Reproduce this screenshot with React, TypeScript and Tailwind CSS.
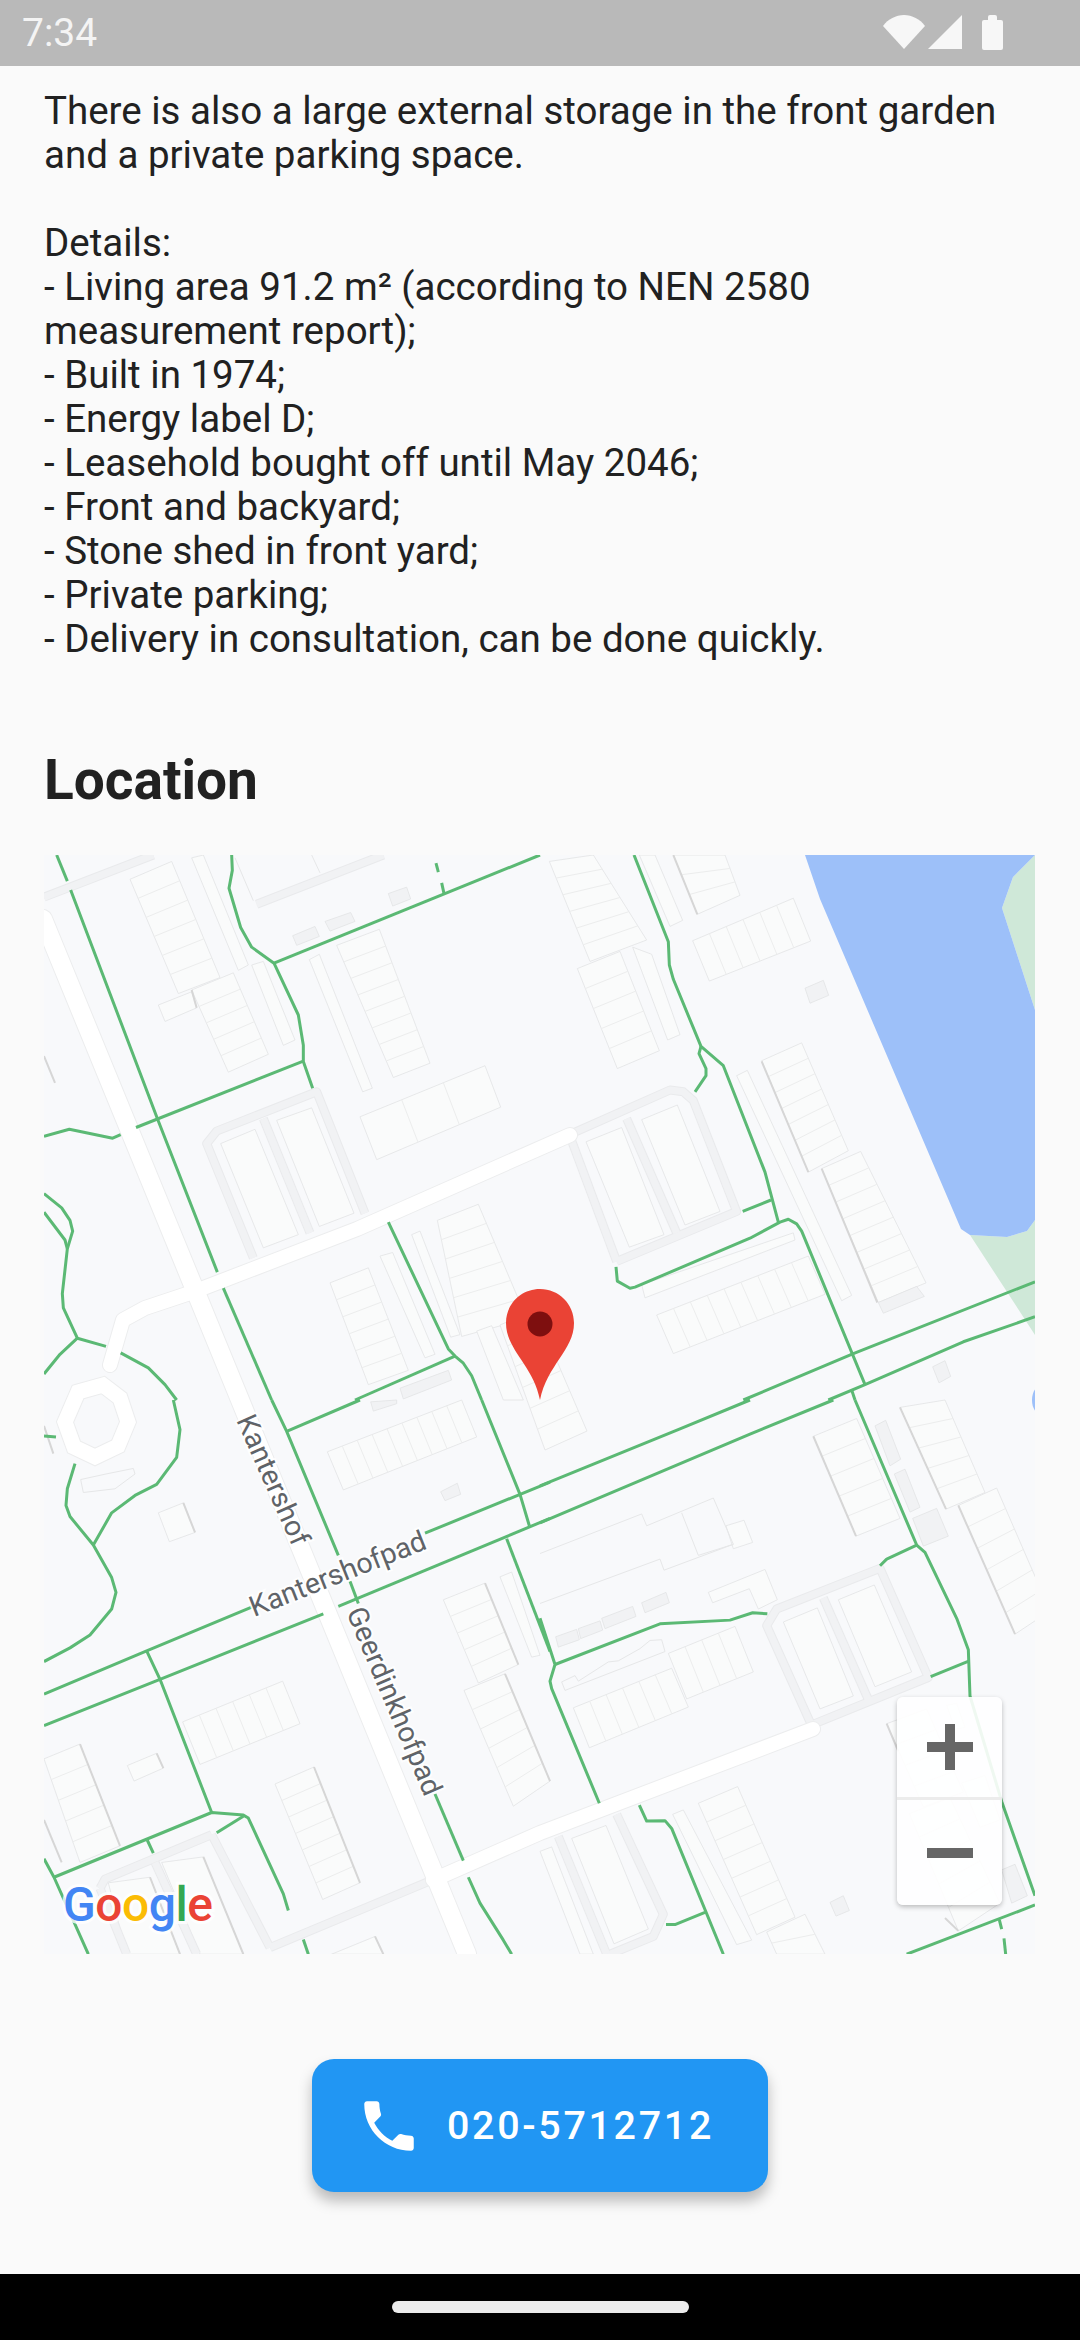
import { MdPhone } from 'react-icons/md'

type Block = { p: number[]; n?: number; gray?: boolean }
type Quad = {
  x: number
  y: number
  sy: number
  green: string[]
  service: string[]
  shadow: string[]
  blocks: Block[]
  outlines: string[]
}

const copy = [
  'There is also a large external storage in the front garden',
  'and a private parking space.',
  '',
  'Details:',
  '- Living area 91.2 m² (according to NEN 2580',
  'measurement report);',
  '- Built in 1974;',
  '- Energy label D;',
  '- Leasehold bought off until May 2046;',
  '- Front and backyard;',
  '- Stone shed in front yard;',
  '- Private parking;',
  '- Delivery in consultation, can be done quickly.',
]

// map features, traced per quarter of the map in that quarter's own coordinates
const quads: Quad[] = [
  {
    x: 30,
    y: 840,
    sy: 2.8,
    green: [
      '80,42 112,115',
      '122,140 382,780 562,1210',
      '580,1255 725,1568',
      '318,805 818,620',
      '42,830 118,810 248,835 272,825',
      '605,42 607,85 597,135 632,245 665,300 732,345 805,490 820,575 820,620 848,695',
      '732,345 1530,42',
      '1218,65 1225,90',
      '1235,120 1242,150',
      '1075,1070 1255,1425 1275,1445 1300,1465 1325,1500 1355,1568',
      '975,1568 1275,1445',
      '42,990 95,1030 120,1065 128,1095 112,1145 97,1270 100,1310 142,1395 228,1418',
      '42,1042 105,1120 112,1145',
      '142,1395 90,1440 42,1495',
      '272,1436 355,1478 405,1525 440,1568',
    ],
    service: [
      '42,160 370,42',
      '680,180 1060,42',
      '670,1170 530,850 560,815 860,705 1005,1045',
      '700,780 840,1100',
    ],
    shadow: ['485,420 500,470', '42,605 75,680'],
    blocks: [
      { p: [300, 110, 425, 60, 570, 385, 445, 430], n: 6 },
      { p: [485, 420, 610, 372, 715, 600, 595, 650], n: 5 },
      { p: [920, 295, 1048, 250, 1200, 625, 1090, 665], n: 8 },
      { p: [385, 462, 485, 425, 500, 470, 405, 508] },
      { p: [990, 775, 1040, 895, 1412, 748, 1365, 632], n: 3 },
      { p: [1222, 1065, 1345, 1020, 1490, 1340, 1295, 1390], n: 6 },
      { p: [1410, 1358, 1515, 1316, 1671, 1655, 1545, 1708], n: 6 },
      { p: [1340, 1375, 1385, 1360, 1480, 1568, 1420, 1568] },
      { p: [900, 1240, 1015, 1198, 1135, 1485, 1015, 1525], n: 6 },
      { p: [485, 50, 520, 42, 655, 350, 625, 365] },
      { p: [665, 350, 700, 340, 795, 560, 760, 575] },
      { p: [838, 335, 868, 320, 1027, 695, 998, 705] },
      { p: [1050, 1165, 1088, 1155, 1215, 1440, 1185, 1450] },
      { p: [1145, 1105, 1170, 1095, 1290, 1385, 1262, 1392] },
      { p: [572, 850, 675, 810, 805, 1105, 700, 1142] },
      { p: [740, 785, 845, 750, 972, 1045, 868, 1082] },
      { p: [1075, 150, 1130, 132, 1142, 165, 1088, 185], gray: true },
      { p: [788, 268, 855, 242, 868, 270, 800, 295], gray: true },
      { p: [885, 228, 962, 203, 975, 228, 900, 255], gray: true },
      { p: [1110, 1535, 1255, 1485, 1265, 1512, 1120, 1565], gray: true },
    ],
    outlines: ['615,50 670,170', '845,42 870,92'],
  },
  {
    x: 540,
    y: 840,
    sy: 2.8,
    green: [
      '282,42 385,285 388,350 400,390 483,578 550,632 675,930 715,1070',
      '483,578 477,598 498,640 498,660 465,705',
      '608,1040 693,1008',
      '228,1195 232,1235 270,1255 285,1252 630,1115 720,1070 745,1062 770,1075 785,1095 975,1525',
      '610,1568 940,1438 1485,1237',
      '865,1568 975,1525 1270,1405 1485,1335',
      '935,1540 945,1568',
    ],
    service: [
      '230,1180 90,830',
      '100,820 390,700 430,705 460,730 590,1040 230,1180',
      '260,780 410,1100',
    ],
    shadow: ['665,620 805,930', '845,920 1012,1295', '400,42 472,208'],
    blocks: [
      { p: [28, 60, 160, 42, 320, 280, 150, 340], n: 6 },
      { p: [112, 360, 240, 312, 358, 590, 232, 640], n: 5 },
      { p: [400, 42, 555, 42, 600, 155, 472, 208], n: 3 },
      { p: [458, 282, 508, 395, 812, 283, 760, 163], n: 6 },
      { p: [665, 618, 785, 568, 925, 870, 805, 930], n: 7 },
      { p: [845, 920, 962, 872, 1158, 1240, 1015, 1295], n: 8 },
      { p: [350, 1330, 400, 1438, 855, 1272, 805, 1165], n: 9 },
      { p: [298, 42, 345, 42, 428, 225, 390, 242] },
      { p: [278, 300, 335, 320, 420, 545, 383, 560] },
      { p: [590, 660, 622, 645, 935, 1275, 905, 1290] },
      { p: [305, 1245, 760, 1100, 765, 1120, 315, 1282] },
      { p: [138, 845, 245, 805, 372, 1105, 268, 1140] },
      { p: [305, 783, 412, 742, 540, 1040, 435, 1078] },
      { p: [795, 415, 850, 393, 866, 435, 810, 457], gray: true },
      { p: [1178, 1475, 1215, 1458, 1232, 1502, 1197, 1520], gray: true },
      { p: [1015, 1295, 1130, 1250, 1153, 1278, 1030, 1325], gray: true },
    ],
    outlines: [],
  },
  {
    x: 30,
    y: 1400,
    sy: 2.703,
    green: [
      '430,0 450,80 440,155 380,228 315,258 245,305 190,392',
      '135,172 112,240 108,285 120,315 190,392 245,480 258,520 245,565 180,635 120,670 42,707',
      '42,97 78,100',
      '725,0 770,85 925,420',
      '960,490 985,550',
      '1215,1065 1300,1245',
      '1315,1290 1350,1360 1420,1460 1445,1498',
      '770,85 990,0',
      '1355,0 1470,255 1498,340',
      '42,795 350,678 665,560',
      '1185,360 1560,222',
      '42,880 390,755 880,578',
      '925,558 1560,320',
      '350,678 390,755 545,1115',
      '72,1290 545,1115 640,1122 655,1130 760,1335 775,1380',
      '560,1170 640,1125',
      '42,1240 72,1290 175,1498',
      '352,1190 370,1225',
      '820,1458 835,1498',
      '1430,375 1560,680',
    ],
    service: [
      '720,1480 1200,1300',
      '545,1175 720,1480',
      '210,1320 225,1295 545,1175',
      '375,1250 500,1498',
      '210,1320 290,1498',
    ],
    shadow: [
      '150,930 270,1205',
      '852,992 990,1305',
      '1365,495 1465,715',
      '1425,740 1560,1030',
      '460,278 495,358',
      '380,955 400,995',
      '42,1135 95,1250',
      '520,1235 640,1498',
      '360,1290 450,1498',
      '1035,1450 1060,1498',
      '42,70 70,145',
    ],
    blocks: [
      { p: [892, 140, 940, 243, 1340, 100, 1295, 0], n: 9 },
      { p: [458, 870, 510, 985, 810, 875, 758, 760], n: 6 },
      { p: [42, 970, 150, 930, 270, 1205, 150, 1250], n: 5 },
      { p: [735, 1038, 852, 992, 990, 1305, 878, 1350], n: 7 },
      { p: [1240, 540, 1365, 495, 1465, 715, 1345, 765], n: 5 },
      { p: [1302, 785, 1425, 740, 1560, 1030, 1450, 1098], n: 6 },
      { p: [385, 305, 460, 278, 495, 358, 418, 383] },
      { p: [292, 988, 380, 955, 400, 995, 312, 1030] },
      { p: [1410, 478, 1445, 465, 1530, 690, 1505, 695] },
      { p: [235, 1305, 360, 1290, 450, 1498, 290, 1498] },
      { p: [395, 1250, 520, 1235, 640, 1498, 510, 1498] },
      { p: [905, 1498, 1035, 1450, 1060, 1498, 1000, 1498] },
      { p: [1232, 248, 1282, 225, 1292, 255, 1245, 272], gray: true },
      { p: [1022, 5, 1100, 0, 1100, 10, 1030, 30], gray: true },
    ],
    outlines: ['152,215 228,200 310,185 315,200 255,240 160,250 152,215'],
  },
  {
    x: 540,
    y: 1400,
    sy: 2.703,
    green: [
      '0,232 420,78 630,0',
      '0,332 630,92 880,0',
      '945,0 1130,392 1155,412 1250,590 1285,675 1290,800 1385,1085 1485,1340',
      '1020,448 1040,430 1130,392',
      '1172,748 1288,705',
      '0,590 45,715 30,760 35,780 178,1090',
      '45,715 360,605 570,595 638,575 682,578',
      '298,1095 320,1138 375,1137 395,1158 550,1498',
      '378,1418 405,1418 495,1385',
      '1100,1498 1485,1365',
      '1378,1405 1385,1430',
      '1392,1455 1397,1498',
    ],
    service: [
      '810,870 680,610 710,565 1020,455 1165,750 810,880',
      '850,535 985,810',
      '230,1120 370,1390 340,1450 210,1498',
      '55,1180 200,1498',
    ],
    shadow: ['1080,20 1218,295', '1255,285 1425,633', '820,98 948,368', '1040,875 1075,950', '1215,1400 1255,1435'],
    blocks: [
      { p: [820, 98, 950, 50, 1080, 320, 948, 368], n: 5 },
      { p: [1080, 20, 1215, 0, 1335, 250, 1218, 295], n: 5 },
      { p: [1255, 285, 1370, 238, 1530, 570, 1425, 633], n: 6 },
      { p: [100, 832, 148, 940, 445, 830, 395, 725], n: 6 },
      { p: [385, 685, 440, 808, 640, 735, 585, 612], n: 4 },
      { p: [730, 600, 832, 562, 940, 800, 840, 835] },
      { p: [895, 540, 1003, 500, 1115, 735, 1005, 775] },
      { p: [475, 1090, 593, 1045, 765, 1398, 650, 1445], n: 7 },
      { p: [680, 1438, 795, 1390, 855, 1498, 710, 1498], n: 2 },
      { p: [398, 1120, 430, 1108, 635, 1460, 590, 1472] },
      { p: [95, 1185, 198, 1150, 325, 1430, 222, 1470] },
      { p: [0, 1220, 35, 1208, 160, 1498, 120, 1498] },
      { p: [1040, 875, 1160, 835, 1270, 1060, 1150, 1100], n: 4 },
      { p: [1108, 1118, 1230, 1075, 1380, 1360, 1255, 1435], n: 5 },
      { p: [1220, 825, 1250, 820, 1275, 885, 1245, 890] },
      { p: [1265, 1035, 1335, 1015, 1380, 1135, 1320, 1155] },
      { p: [505, 520, 675, 458, 712, 540, 655, 565, 628, 510, 518, 548] },
      { p: [558, 340, 612, 325, 638, 385, 580, 402] },
      { p: [1005, 70, 1037, 55, 1082, 160, 1050, 178], gray: true },
      { p: [1063, 200, 1095, 187, 1140, 290, 1110, 303], gray: true },
      { p: [1118, 320, 1190, 293, 1225, 368, 1150, 395], gray: true },
      { p: [47, 640, 110, 620, 118, 648, 55, 668], gray: true },
      { p: [115, 618, 180, 597, 188, 622, 122, 645], gray: true },
      { p: [185, 590, 278, 558, 288, 585, 195, 618], gray: true },
      { p: [305, 548, 378, 520, 388, 548, 315, 575], gray: true },
      { p: [1385, 1270, 1425, 1255, 1462, 1340, 1415, 1360], gray: true },
      { p: [870, 1358, 910, 1340, 928, 1380, 888, 1395], gray: true },
    ],
    outlines: [
      '0,415 305,308 320,340 520,265 580,390 475,420 425,305',
      '0,550 360,430 372,460 580,390',
      '65,762 105,745 115,760 205,708 235,705 300,672 330,650 365,648 375,680 75,785 65,762',
    ],
  },
]

const roads = [
  '43,919 467,1954',
  '570,1135 357,1229 193,1292 145,1308 123,1320 110,1365',
  '433,1880 540,1833 813,1729',
]
const roundabout = '78,1392 103,1385 120,1398 128,1422 118,1446 95,1457 74,1447 65,1422'

function layer(render: (q: Quad) => React.ReactNode) {
  return quads.map((q, i) => (
    <g key={i} transform={`translate(${q.x} ${q.y}) scale(${1 / 3} ${1 / q.sy})`}>
      {render(q)}
    </g>
  ))
}

function BlockShape({ block }: { block: Block }) {
  const { p, n = 1, gray } = block
  const dividers = []
  for (let i = 1; i < n; i++) {
    const t = i / n
    dividers.push(
      <line
        key={i}
        x1={p[0] + (p[6] - p[0]) * t}
        y1={p[1] + (p[7] - p[1]) * t}
        x2={p[2] + (p[4] - p[2]) * t}
        y2={p[3] + (p[5] - p[3]) * t}
        stroke="#eceded"
        strokeWidth={1}
        vectorEffect="non-scaling-stroke"
      />,
    )
  }
  return (
    <>
      <polygon
        points={p.join(' ')}
        fill={gray ? '#f1f2f4' : '#fafbfb'}
        stroke="#e2e3e4"
        strokeWidth={0.8}
        vectorEffect="non-scaling-stroke"
      />
      {dividers}
    </>
  )
}

function Line({ points, color, width }: { points: string; color: string; width: number }) {
  return (
    <polyline
      points={points}
      fill="none"
      stroke={color}
      strokeWidth={width}
      strokeLinejoin="round"
      vectorEffect="non-scaling-stroke"
    />
  )
}

function MapCanvas() {
  return (
    <svg viewBox="44 855 991 1099" className="block h-[1099px] w-[991px] bg-[#f8f9fb]">
      {/* park and water */}
      <polygon points="1035,855 1013,877 1002,908 1035,1010" fill="#cfe8d8" />
      <polygon points="970,1235 1007,1237 1027,1231 1035,1220 1035,1335" fill="#cfe8d8" />
      <polygon
        points="805,855 1035,855 1013,877 1002,908 1035,1010 1035,1220 1027,1231 1007,1237 970,1235 961,1229 820,899"
        fill="#9dc0f9"
      />
      <ellipse cx="1042" cy="1400" rx="10" ry="15" fill="#9dc0f9" />

      {layer((q) => q.blocks.map((b, i) => <BlockShape key={i} block={b} />))}
      {layer((q) => q.shadow.map((s, i) => <Line key={i} points={s} color="#d6d6d6" width={2} />))}
      {layer((q) => q.outlines.map((s, i) => <Line key={i} points={s} color="#e6e7e8" width={1} />))}
      {layer((q) => q.service.map((s, i) => <Line key={i} points={s} color="#e9eaec" width={9} />))}
      {layer((q) => q.service.map((s, i) => <Line key={i} points={s} color="#f1f2f4" width={7} />))}

      {roads.map((r, i) => (
        <polyline key={i} points={r} fill="none" stroke="#ecedee" strokeWidth={i === 0 ? 20 : 16} strokeLinecap="round" strokeLinejoin="round" />
      ))}
      <polygon points={roundabout} fill="none" stroke="#ecedee" strokeWidth={17} />
      {roads.map((r, i) => (
        <polyline key={i} points={r} fill="none" stroke="#ffffff" strokeWidth={i === 0 ? 18 : 14} strokeLinecap="round" strokeLinejoin="round" />
      ))}
      <polygon points={roundabout} fill="none" stroke="#ffffff" strokeWidth={15} />

      {layer((q) => q.green.map((s, i) => <Line key={i} points={s} color="#5bb974" width={3} />))}

      {/* street names */}
      <g className="[font-family:Roboto,sans-serif] text-[28.5px] [paint-order:stroke]" fill="#5f6368" stroke="#ffffff" strokeOpacity={0.85} strokeWidth={4}>
        <text transform="translate(236 1420) rotate(66)">Kantershof</text>
        <text transform="translate(254 1617) rotate(-21.5)">Kantershofpad</text>
        <text transform="translate(346 1612) rotate(67)">Geerdinkhofpad</text>
      </g>

      {/* marker */}
      <path
        d="M540 1289C521 1289 506 1304 506 1323C506 1350 533 1365 540 1400C547 1365 574 1350 574 1323C574 1304 559 1289 540 1289Z"
        fill="#ea4335"
      />
      <circle cx="540" cy="1324" r="12.5" fill="#7e0f0f" />

      {/* logo */}
      <text
        x="63"
        y="1921"
        textLength={150}
        lengthAdjust="spacing"
        className="[font-family:Roboto,sans-serif] text-[48px] font-medium [paint-order:stroke]"
        stroke="#ffffff"
        strokeOpacity={0.8}
        strokeWidth={6}
      >
        <tspan fill="#4285f4">G</tspan>
        <tspan fill="#ea4335">o</tspan>
        <tspan fill="#fbbc04">o</tspan>
        <tspan fill="#4285f4">g</tspan>
        <tspan fill="#34a853">l</tspan>
        <tspan fill="#ea4335">e</tspan>
      </text>
    </svg>
  )
}

export default function App() {
  return (
    <div className="flex h-[2340px] w-[1080px] flex-col overflow-hidden bg-[#fafafa] [font-family:Roboto,sans-serif]">
      {/* Status bar */}
      <div className="flex h-[66px] shrink-0 items-center justify-between bg-[#b9b9b9] pl-[22px] pr-[77px] text-[39px] leading-none text-[#f4f4f4]">
        <span>7:34</span>
        <svg width="120" height="36" viewBox="883 15 120 36" fill="#f7f7f7">
          <path d="M883 26C888 19 896 15 904 15C912 15 920 19 925 26L904 49Z" />
          <path d="M962 15V49H928Z" />
          <path d="M988 17Q988 15 990 15H995Q997 15 997 17V20H1001Q1003 20 1003 22V48Q1003 50 1001 50H984Q982 50 982 48V22Q982 20 984 20H988Z" />
        </svg>
      </div>

      {/* Description */}
      <div className="px-[44px] pt-[23px]">
        {copy.map((line, i) => (
          <p key={i} className="h-[44px] whitespace-pre text-[38.5px] leading-[44px] text-[#212121]">
            {line}
          </p>
        ))}

        <h2 className="mt-[89px] text-[55px] font-bold leading-[60px] text-[#212121]">Location</h2>

        {/* Map */}
        <div className="relative mt-[45px] w-[991px]">
          <MapCanvas />
          <div className="absolute left-[853px] top-[842px] flex h-[208px] w-[105px] flex-col rounded-[6px] bg-white/90 shadow-[0_2px_5px_rgba(0,0,0,0.25)]">
            <div className="flex h-[103px] items-center justify-center border-b-[3px] border-[#ececec]">
              <svg width="46" height="46" viewBox="0 0 46 46" fill="#666666">
                <path d="M18 0H28V18H46V28H28V46H18V28H0V18H18Z" />
              </svg>
            </div>
            <div className="flex flex-1 items-center justify-center">
              <div className="h-[10px] w-[46px] bg-[#666666]" />
            </div>
          </div>
        </div>
      </div>

      {/* Call button */}
      <div className="mt-[105px] flex justify-center">
        <button className="flex h-[133px] w-[456px] items-center rounded-[22px] bg-[#2196f3] pl-[44px] text-white shadow-[0_9px_14px_rgba(0,0,0,0.26)]">
          <MdPhone size={66} />
          <span className="ml-[25px] text-[39.4px] font-medium tracking-[2.7px]">020-5712712</span>
        </button>
      </div>

      {/* Nav bar */}
      <div className="mt-auto flex h-[66px] shrink-0 justify-center bg-black pt-[27px]">
        <div className="h-[12px] w-[297px] rounded-full bg-[#ececec]" />
      </div>
    </div>
  )
}
